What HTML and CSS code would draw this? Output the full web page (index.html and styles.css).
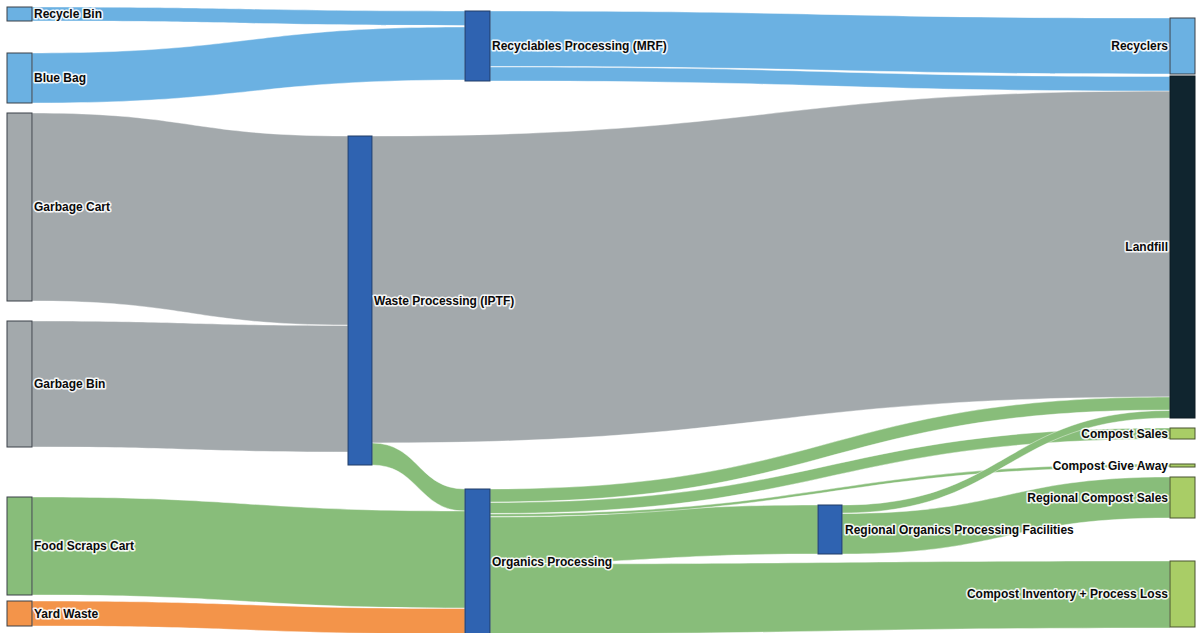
FILE: index.html
```html
<!DOCTYPE html>
<html lang="en">
<head>
<meta charset="utf-8">
<title>Waste Flow Sankey</title>
<link rel="stylesheet" href="styles.css">
</head>
<body>
<div class="chart">
<svg class="sankey" width="1200" height="633" viewBox="0 0 1200 633" xmlns="http://www.w3.org/2000/svg">
  <g class="links">
    <path class="link grey" d="M372 136C771 136 771 91 1170 91L1170 397C771 397 771 443 372 443Z"/>
    <path class="link grey" d="M32 113C190 113 190 136 348 136L348 325C190 325 190 301 32 301Z"/>
    <path class="link grey" d="M32 321C190 321 190 325.5 348 325.5L348 452C190 452 190 447 32 447Z"/>
    <path class="link blue" d="M32 7C248.5 7 248.5 11 465 11L465 25.5C248.5 25.5 248.5 21 32 21Z"/>
    <path class="link blue" d="M32 53C248.5 53 248.5 27 465 27L465 80C248.5 80 248.5 103 32 103Z"/>
    <path class="link blue" d="M490 11C830 11 830 18 1170 18L1170 74C830 74 830 66.5 490 66.5Z"/>
    <path class="link blue" d="M490 67C830 67 830 76.5 1170 76.5L1170 91C830 91 830 81 490 81Z"/>
    <path class="link green" d="M372 443C418.5 443 418.5 489 465 489L465 511C418.5 511 418.5 465 372 465Z"/>
    <path class="link green" d="M32 497C248.5 497 248.5 511 465 511L465 608C248.5 608 248.5 595 32 595Z"/>
    <path class="link orange" d="M32 601C248.5 601 248.5 608.5 465 608.5L465 634C248.5 634 248.5 626 32 626Z"/>
    <path class="link green" d="M490 564C830 564 830 561 1170 561L1170 628C830 628 830 634 490 634Z"/>
    <path class="link green" d="M490 517C654 517 654 505 818 505L818 554C654 554 654 563.5 490 563.5Z"/>
    <path class="link green" d="M490 489C830 489 830 397 1170 397L1170 410C830 410 830 502 490 502Z"/>
    <path class="link green" d="M490 502.5C830 502.5 830 428 1170 428L1170 439C830 439 830 513.5 490 513.5Z"/>
    <path class="link green" d="M490 514C830 514 830 464 1170 464L1170 467C830 467 830 516.5 490 516.5Z"/>
    <path class="link green" d="M842 513.5C1006 513.5 1006 477 1170 477L1170 518C1006 518 1006 554 842 554Z"/>
    <path class="link green" d="M842 505C1006 505 1006 410.5 1170 410.5L1170 418C1006 418 1006 513 842 513Z"/>
  </g>
  <g class="nodes">
    <rect class="node n-blue" x="7" y="7" width="25" height="14"/>
    <rect class="node n-blue" x="7" y="53" width="25" height="50"/>
    <rect class="node n-grey" x="7" y="113" width="25" height="188"/>
    <rect class="node n-grey" x="7" y="321" width="25" height="126"/>
    <rect class="node n-green" x="7" y="497" width="25" height="98"/>
    <rect class="node n-orange" x="7" y="601" width="25" height="25"/>
    <rect class="node n-proc" x="348" y="136" width="24" height="329"/>
    <rect class="node n-proc" x="465" y="11" width="25" height="70"/>
    <rect class="node n-proc" x="465" y="489" width="25" height="150"/>
    <rect class="node n-proc" x="818" y="505" width="24" height="49"/>
    <rect class="node n-blue" x="1170" y="18" width="25" height="56"/>
    <rect class="node n-landfill" x="1170" y="76" width="25" height="342"/>
    <rect class="node n-compost" x="1170" y="428" width="25" height="11"/>
    <rect class="node n-compost" x="1170" y="464" width="25" height="3"/>
    <rect class="node n-compost" x="1170" y="477" width="25" height="41"/>
    <rect class="node n-compost" x="1170" y="561" width="25" height="66"/>
  </g>
  <g class="labels">
    <text class="label" x="34" y="14">Recycle Bin</text>
    <text class="label" x="34" y="78">Blue Bag</text>
    <text class="label" x="34" y="207">Garbage Cart</text>
    <text class="label" x="34" y="384">Garbage Bin</text>
    <text class="label" x="34" y="546">Food Scraps Cart</text>
    <text class="label" x="34" y="613.5">Yard Waste</text>
    <text class="label" x="374" y="300.5">Waste Processing (IPTF)</text>
    <text class="label" x="492" y="46">Recyclables Processing (MRF)</text>
    <text class="label" x="492" y="561.5">Organics Processing</text>
    <text class="label" x="845" y="529.5">Regional Organics Processing Facilities</text>
    <text class="label end" x="1168" y="46">Recyclers</text>
    <text class="label end" x="1168" y="247">Landfill</text>
    <text class="label end" x="1168" y="433.5">Compost Sales</text>
    <text class="label end" x="1168" y="465.5">Compost Give Away</text>
    <text class="label end" x="1168" y="497.5">Regional Compost Sales</text>
    <text class="label end" x="1168" y="594">Compost Inventory + Process Loss</text>
  </g>
</svg>
</div>
</body>
</html>
```

FILE: styles.css
```css
html, body {
  margin: 0;
  padding: 0;
  background: #ffffff;
}

.chart {
  width: 1200px;
  height: 633px;
  overflow: hidden;
  background: #ffffff;
}

.sankey {
  display: block;
}

.link {
  stroke: #ffffff;
  stroke-width: 0.6;
  stroke-opacity: 0.7;
}

.link.blue { fill: #6bb1e2; }
.link.grey { fill: #a3a9ac; }
.link.green { fill: #88bd7a; }
.link.orange { fill: #f3944a; }

.node {
  stroke: #3b4148;
  stroke-width: 1;
}

.n-blue { fill: #6bb1e2; }
.n-grey { fill: #a3a9ac; }
.n-green { fill: #88bd7a; }
.n-orange { fill: #f3944a; }
.n-proc { fill: #2f63b1; stroke: #203c66; }
.n-landfill { fill: #10252f; stroke: #0b1a22; }
.n-compost { fill: #a9cd66; stroke: #48552e; }

.label {
  font-family: "Liberation Sans", Arial, sans-serif;
  font-weight: 700;
  font-size: 12px;
  fill: #0a0a0a;
  dominant-baseline: central;
  paint-order: stroke;
  stroke: #ffffff;
  stroke-width: 3.2px;
  stroke-linejoin: round;
  stroke-opacity: 0.9;
}

.label.end {
  text-anchor: end;
}
```
